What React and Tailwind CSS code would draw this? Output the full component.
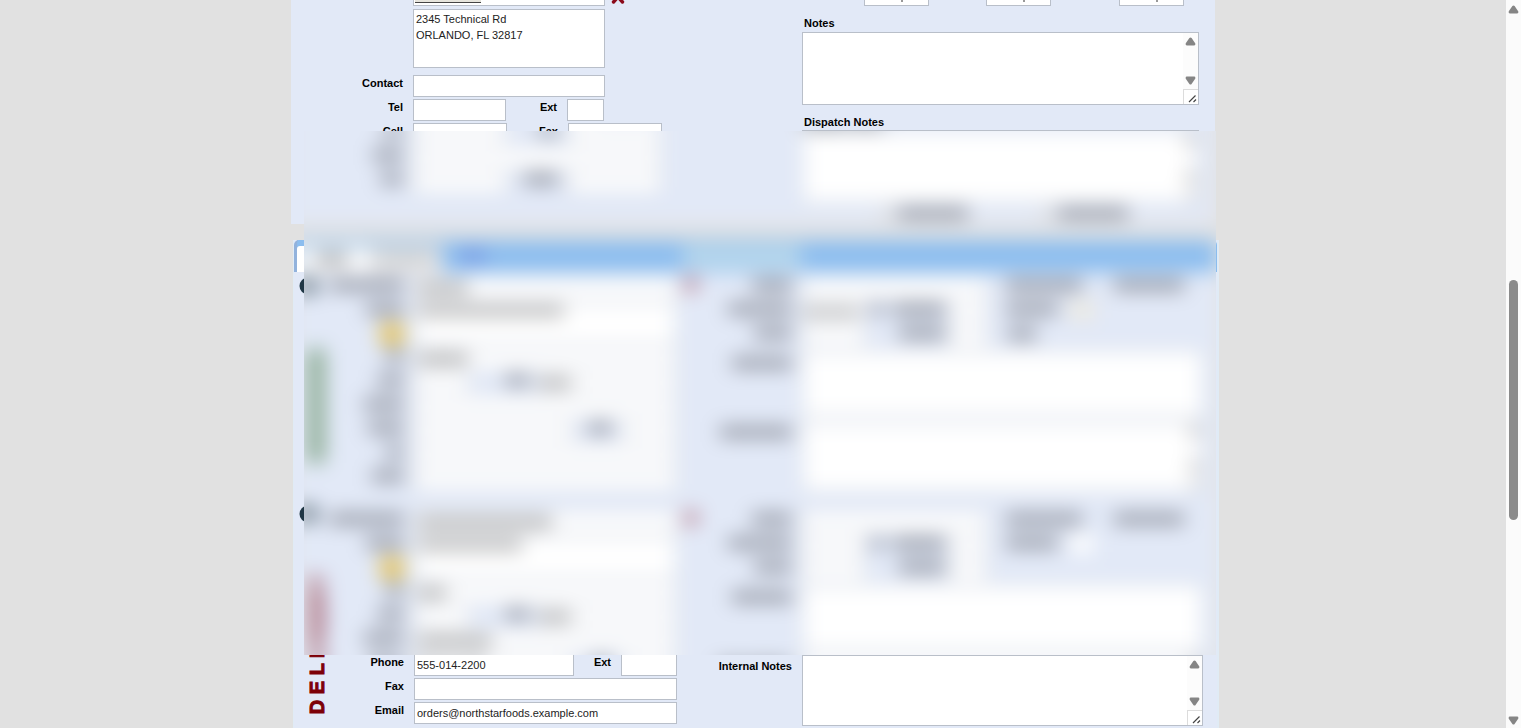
import React, { useId } from 'react';
import clsx from 'clsx';

const field = 'border border-[#b9bfc9] bg-white px-[2px] text-[11px] text-[#222] outline-none';

// bar that stands for a word hidden by the privacy overlay
const Ink = ({ className }) => (
  <span className={clsx('block shrink-0', className)} />
);

const Label = ({ htmlFor, text, ink, className }) => (
  <label
    htmlFor={htmlFor}
    className={clsx('flex h-4 shrink-0 items-center justify-end text-[11px] font-bold leading-4 text-black whitespace-nowrap', className)}
  >
    {text || <Ink className={clsx('h-[10px] bg-[#878b96]', ink)} />}
  </label>
);

const Arrow = ({ down }) => (
  <svg width="11" height="9" viewBox="0 0 11 9" className={down ? 'rotate-180' : ''}>
    <path d="M4.4 0.9Q5.5 -0.1 6.6 0.9L10.2 6.2Q10.8 8.4 9.2 8.4H1.8Q0.2 8.4 0.8 6.2Z" fill="#858585" />
  </svg>
);

const NotesBox = ({ id, className, scroll = true }) => (
  <div className={clsx('flex w-full border border-[#b9bfc9] bg-white', className)}>
    <textarea id={id} aria-label={id} className="min-w-0 flex-1 resize-none bg-transparent px-[2px] text-[11px] leading-4 outline-none" />
    {scroll && (
      <div className="flex w-[15px] flex-col items-center bg-[#fcfcfc]">
        <div className="flex flex-1 flex-col items-center justify-between pb-1 pt-1">
          <Arrow />
          <Arrow down />
        </div>
        <div className="flex h-[15px] w-full items-end justify-end border-l border-t border-[#dcdcdc] bg-white p-[1px]">
          <svg width="9" height="9" viewBox="0 0 9 9" fill="none" stroke="#444" strokeWidth="1.2">
            <path d="M1 8L7.5 1.5M5.5 8L8 5.5" />
          </svg>
        </div>
      </div>
    )}
  </div>
);

const RedX = () => (
  <svg width="14" height="14" viewBox="0 0 14 14" stroke="#8b0a1a" strokeWidth="3.4" strokeLinecap="round">
    <path d="M2.5 2L11.5 12M11.5 2L2.5 12" />
  </svg>
);

const Customer = () => {
  const id = useId();
  return (
    <section className="-mt-4 flex bg-[#e2e9f7] pb-[3px] pr-4">
      <div className="flex w-[511px] shrink-0 flex-col gap-[2px]">
        <div className="flex gap-[6px] pl-[122px]">
          <div className="h-[22px] w-[192px] border border-[#b9bfc9] bg-white px-[1px]">
            <div className="h-[18px] w-[66px] border-b border-[#444] bg-[#e6e4dc]" />
          </div>
          <button type="button" aria-label="Clear" className="flex h-[20px] items-end"><RedX /></button>
        </div>
        <div className="mb-[5px] mt-[1px] flex pl-[122px]">
          <textarea
            aria-label="Address"
            defaultValue={'2345 Technical Rd\nORLANDO, FL 32817'}
            className={clsx(field, 'h-[59px] w-[192px] resize-none px-[1px] py-[1px] leading-4')}
          />
        </div>
        <div className="flex gap-[10px]">
          <Label htmlFor={`${id}contact`} text="Contact" className="w-[112px]" />
          <input id={`${id}contact`} className={clsx(field, 'h-[22px] w-[192px]')} />
        </div>
        <div className="flex gap-[10px]">
          <Label htmlFor={`${id}tel`} text="Tel" className="w-[112px]" />
          <input id={`${id}tel`} className={clsx(field, 'h-[22px] w-[93px]')} />
          <Label htmlFor={`${id}ext`} text="Ext" className="w-[41px]" />
          <input id={`${id}ext`} className={clsx(field, 'h-[22px] w-[37px]')} />
        </div>
        <div className="flex gap-[10px]">
          <Label htmlFor={`${id}cell`} text="Cell" className="w-[112px]" />
          <input id={`${id}cell`} className={clsx(field, 'h-[22px] w-[94px]')} />
          <Label htmlFor={`${id}fax`} text="Fax" className="w-[41px]" />
          <input id={`${id}fax`} className={clsx(field, 'h-[22px] w-[94px]')} />
        </div>
        <div className="flex gap-[10px]">
          <Label htmlFor={`${id}a`} ink="w-[30px]" className="w-[112px]" />
          <input id={`${id}a`} className={clsx(field, 'h-[22px] w-[249px]')} />
        </div>
        <div className="flex gap-[10px]">
          <Label htmlFor={`${id}b`} ink="w-[22px]" className="w-[112px]" />
          <input id={`${id}b`} className={clsx(field, 'h-[22px] w-[94px]')} />
          <Label htmlFor={`${id}c`} ink="w-[34px]" className="w-[41px]" />
          <input id={`${id}c`} className={clsx(field, 'h-[22px] w-[94px]')} />
        </div>
      </div>

      <div className="flex min-w-0 flex-1 flex-col items-start">
        <div className="flex pl-[62px]">
          {['mr-[57px]', 'mr-[68px]', ''].map((gap, i) => (
            <div key={i} className={clsx('h-[22px] w-[65px] border border-[#b9bfc9] bg-white pl-[36px] pt-[15px]', gap)}>
              <div className="h-[2px] w-[2px] bg-[#999]" />
            </div>
          ))}
        </div>
        <Label htmlFor="Notes" text="Notes" className="mb-[1px] mt-[9px] pl-[2px]" />
        <NotesBox id="Notes" className="h-[73px]" />
        <Label htmlFor="Dispatch Notes" text="Dispatch Notes" className="mt-[9px] pl-[2px]" />
        <NotesBox id="Dispatch Notes" className="h-[73px]" />
        <div className="mt-[2px] flex h-4 items-center gap-[4px] pl-[80px]">
          <input id={`${id}d`} type="checkbox" className="h-3 w-3" />
          <Label htmlFor={`${id}d`} ink="w-[70px]" />
          <input id={`${id}e`} type="checkbox" className="ml-[70px] h-3 w-3" />
          <Label htmlFor={`${id}e`} ink="w-[70px]" />
        </div>
      </div>
    </section>
  );
};

const TextRow = ({ id, ink, value, className }) => (
  <div className="flex gap-[10px]">
    <Label htmlFor={id} ink={ink} className="w-[75px]" />
    <div className={clsx('flex h-[22px] w-[263px] items-center border border-[#b9bfc9] bg-white pl-[3px]', className)}>
      {value && <Ink className={clsx('h-[10px] bg-[#a8a8a8]', value)} />}
      <input id={id} className="h-full min-w-0 flex-1 outline-none" />
    </div>
  </div>
);

// pick-up and delivery blocks share one layout
const Stop = ({ delivery }) => {
  const id = useId();
  return (
    <section className="flex items-stretch pb-[14px] pr-[14px] pt-[5px]">
      <div className={clsx('flex w-[35px] shrink-0 flex-col justify-between pl-[5px]', delivery ? '-mt-[6px] pb-[12px]' : 'pb-[29px]')}>
        <button type="button" aria-label="Add" className="h-[18px] w-[18px]">
          <svg width="18" height="18" viewBox="0 0 18 18">
            <circle cx="9" cy="9" r="8.5" fill="#1f3644" />
            <path d="M9 5V13M5 9H13" stroke="#fff" strokeWidth="2.4" />
          </svg>
        </button>
        {delivery ? (
          <span className="ml-[7px] rotate-180 self-start whitespace-nowrap text-[20px] font-black leading-[22px] text-[#7d0008] [-webkit-text-stroke:1px_#7d0008] [writing-mode:vertical-rl]">
            D E L I V E R Y
          </span>
        ) : (
          <Ink className="ml-[8px] h-[114px] w-[18px] bg-[#8fae97]" />
        )}
      </div>

      <div className="flex w-[349px] shrink-0 flex-col gap-[2px]">
        <TextRow id={`${id}1`} ink="w-[75px]" value={delivery ? 'w-[134px]' : 'w-[50px]'} />
        <div className="flex gap-[10px]">
          <div className="flex w-[75px] flex-col items-end gap-[6px]">
            <Label htmlFor={`${id}2`} ink="w-[38px]" />
            <button type="button" aria-label="Lookup" className="h-[22px] w-[24px] bg-[#e3c25e]" />
          </div>
          <div className="flex h-[45px] w-[263px] border border-[#b9bfc9] bg-white pl-[3px] pt-[4px]">
            <Ink className={clsx('h-[10px] bg-[#acacac]', delivery ? 'w-[104px]' : 'w-[146px]')} />
            <textarea id={`${id}2`} className="min-w-0 flex-1 resize-none outline-none" />
          </div>
        </div>
        <TextRow id={`${id}3`} ink="w-[18px]" value={delivery ? 'w-[28px]' : 'w-[50px]'} />
        <div className="flex gap-[10px]">
          <Label htmlFor={`${id}4`} ink="w-[26px]" className="w-[75px]" />
          <select id={`${id}4`} className={clsx(field, 'h-[22px] w-[56px] appearance-none')} />
          <Label htmlFor={`${id}5`} ink="w-[22px]" className="w-[48px]" />
          <div className="flex h-[22px] w-[139px] items-center border border-[#b9bfc9] bg-white">
            <Ink className="h-[10px] w-[32px] bg-[#acacac]" />
            <input id={`${id}5`} className="h-full min-w-0 flex-1 outline-none" />
          </div>
        </div>
        <TextRow id={`${id}6`} ink="w-[40px]" value={delivery && 'w-[74px]'} />
        {delivery ? (
          <>
            <div className="flex gap-[10px]">
              <Label htmlFor="phone" text="Phone" className="w-[75px]" />
              <input id="phone" defaultValue="555-014-2200" className={clsx(field, 'h-[22px] w-[160px]')} />
              <Label htmlFor="ext" text="Ext" className="w-[27px]" />
              <input id="ext" className={clsx(field, 'h-[22px] w-[56px]')} />
            </div>
            <div className="flex gap-[10px]">
              <Label htmlFor="fax" text="Fax" className="w-[75px]" />
              <input id="fax" className={clsx(field, 'h-[22px] w-[263px]')} />
            </div>
            <div className="flex gap-[10px]">
              <Label htmlFor="email" text="Email" className="w-[75px]" />
              <input id="email" defaultValue="orders@northstarfoods.example.com" className={clsx(field, 'h-[22px] w-[263px]')} />
            </div>
          </>
        ) : (
          <>
            <div className="flex gap-[10px]">
              <Label htmlFor={`${id}7`} ink="w-[36px]" className="w-[75px]" />
              <input id={`${id}7`} className={clsx(field, 'h-[22px] w-[160px]')} />
              <Label htmlFor={`${id}8`} ink="w-[22px]" className="w-[27px]" />
              <input id={`${id}8`} className={clsx(field, 'h-[22px] w-[56px]')} />
            </div>
            <TextRow id={`${id}9`} ink="w-[18px]" />
            <TextRow id={`${id}10`} ink="w-[32px]" />
          </>
        )}
      </div>

      <div className="flex w-[26px] shrink-0 items-start justify-center">
        <button type="button" aria-label="Clear" className="opacity-80"><RedX /></button>
      </div>

      <div className="flex min-w-0 flex-1 flex-col">
        <div className="mb-[2px] flex">
          <Label htmlFor={`${id}11`} ink="w-[40px]" className="mr-[10px] w-[88px]" />
          <input id={`${id}11`} className={clsx(field, 'h-[22px] w-[186px]')} />
          <Ink className="ml-[18px] mt-[3px] h-[10px] w-[76px] bg-[#878b96]" />
          <Ink className="ml-[32px] mt-[3px] h-[10px] w-[70px] bg-[#878b96]" />
        </div>
        <div className="mb-[2px] flex">
          <Label htmlFor={`${id}12`} ink="w-[64px]" className="mr-[10px] w-[88px]" />
          <div className="flex h-[22px] w-[64px] items-center border border-[#b9bfc9] bg-white">
            {!delivery && <Ink className="h-[10px] w-[56px] bg-[#bbb]" />}
            <input id={`${id}12`} className="min-w-0 flex-1 outline-none" />
          </div>
          <Ink className="ml-1 mt-[2px] h-[12px] w-[14px] bg-[#9da3b2]" />
          <Label htmlFor={`${id}13`} ink="w-[52px]" className="mr-[4px] w-[61px]" />
          <input id={`${id}13`} className={clsx(field, 'h-[22px] w-[39px]')} />
          <Label htmlFor={`${id}14`} ink="w-[52px]" className="ml-[18px]" />
          <input id={`${id}14`} className={clsx('ml-3 h-[18px] w-[24px]', delivery ? 'bg-white' : 'bg-[#eeeade]')} />
        </div>
        <div className="mb-[3px] flex">
          <Label htmlFor={`${id}15`} ink="w-[38px]" className="mr-[10px] w-[88px]" />
          <input id={`${id}15`} className={clsx(field, 'h-[22px] w-[64px]')} />
          <Label htmlFor={`${id}16`} ink="w-[46px]" className="mr-[4px] w-[79px]" />
          <input id={`${id}16`} className={clsx(field, 'h-[22px] w-[39px]')} />
          {!delivery && <Ink className="ml-[20px] mt-[4px] h-[10px] w-[28px] bg-[#878b96]" />}
        </div>
        <div className="mb-[3px] flex">
          <Label htmlFor={`${id}17`} ink="w-[60px]" className="mr-[10px] mt-[5px] w-[88px]" />
          <NotesBox id={`${id}17`} scroll={false} className="h-[68px]" />
        </div>
        <div className="flex">
          <Label
            htmlFor={`${id}18`}
            text={delivery && 'Internal Notes'}
            ink="w-[72px]"
            className="mr-[10px] mt-[3px] w-[88px]"
          />
          <NotesBox id={`${id}18`} className="h-[71px]" />
        </div>
      </div>
    </section>
  );
};

const PageScrollbar = () => (
  <div className="flex w-[15px] shrink-0 flex-col items-center bg-[#fbfbfb] pb-[3px] pt-[5px]">
    <Arrow />
    <div className="flex w-[9px] flex-1 flex-col">
      <div className="flex-[266]" />
      <div className="flex-[240] rounded-full bg-[#8b8b8b]" />
      <div className="flex-[196]" />
    </div>
    <Arrow down />
  </div>
);

const App = () => (
  <div className="flex h-screen overflow-hidden bg-[#e1e1e1] font-['Liberation_Sans',Arial,sans-serif]">
    <main className="min-w-0 flex-1">
      <div className="relative mx-auto flex w-full max-w-[924px] flex-col">
        <Customer />
        <div className="-mr-1 ml-[2px] mt-4 border-l border-r-2 border-[#e0ebf5] bg-[#e2e9f7]">
          <div className="flex h-8 rounded-t-[5px] border-l-[3px] border-[#92b2dc] bg-[#8bbdef] pt-[6px]">
            <button type="button" aria-label="Tab one" className="flex w-[70px] items-center justify-center rounded-tl-[3px] bg-white">
              <Ink className="h-[14px] w-[34px] bg-[#b5b5b5]" />
            </button>
            <button type="button" aria-label="Tab two" className="flex w-[75px] items-center justify-center bg-[#e2e2e2]">
              <Ink className="h-[10px] w-[50px] bg-[#cfcfcf]" />
            </button>
            <Ink className="ml-[19px] mt-[5px] h-[10px] w-[24px] bg-[#6f8de0]" />
            <Ink className="ml-[198px] h-[22px] w-[118px] bg-[#b6d7ec]" />
          </div>
          <Stop />
          <Stop delivery />
        </div>
        {/* the blur layer is larger than what it shows, its own edges would let the form through */}
        <div className="pointer-events-none absolute -left-[19px] -right-[33px] top-[99px] h-[588px] backdrop-blur-[10px] [mask:linear-gradient(#000,#000)_center/calc(100%-64px)_calc(100%-64px)_no-repeat]" />
      </div>
    </main>
    <PageScrollbar />
  </div>
);

export default App;
